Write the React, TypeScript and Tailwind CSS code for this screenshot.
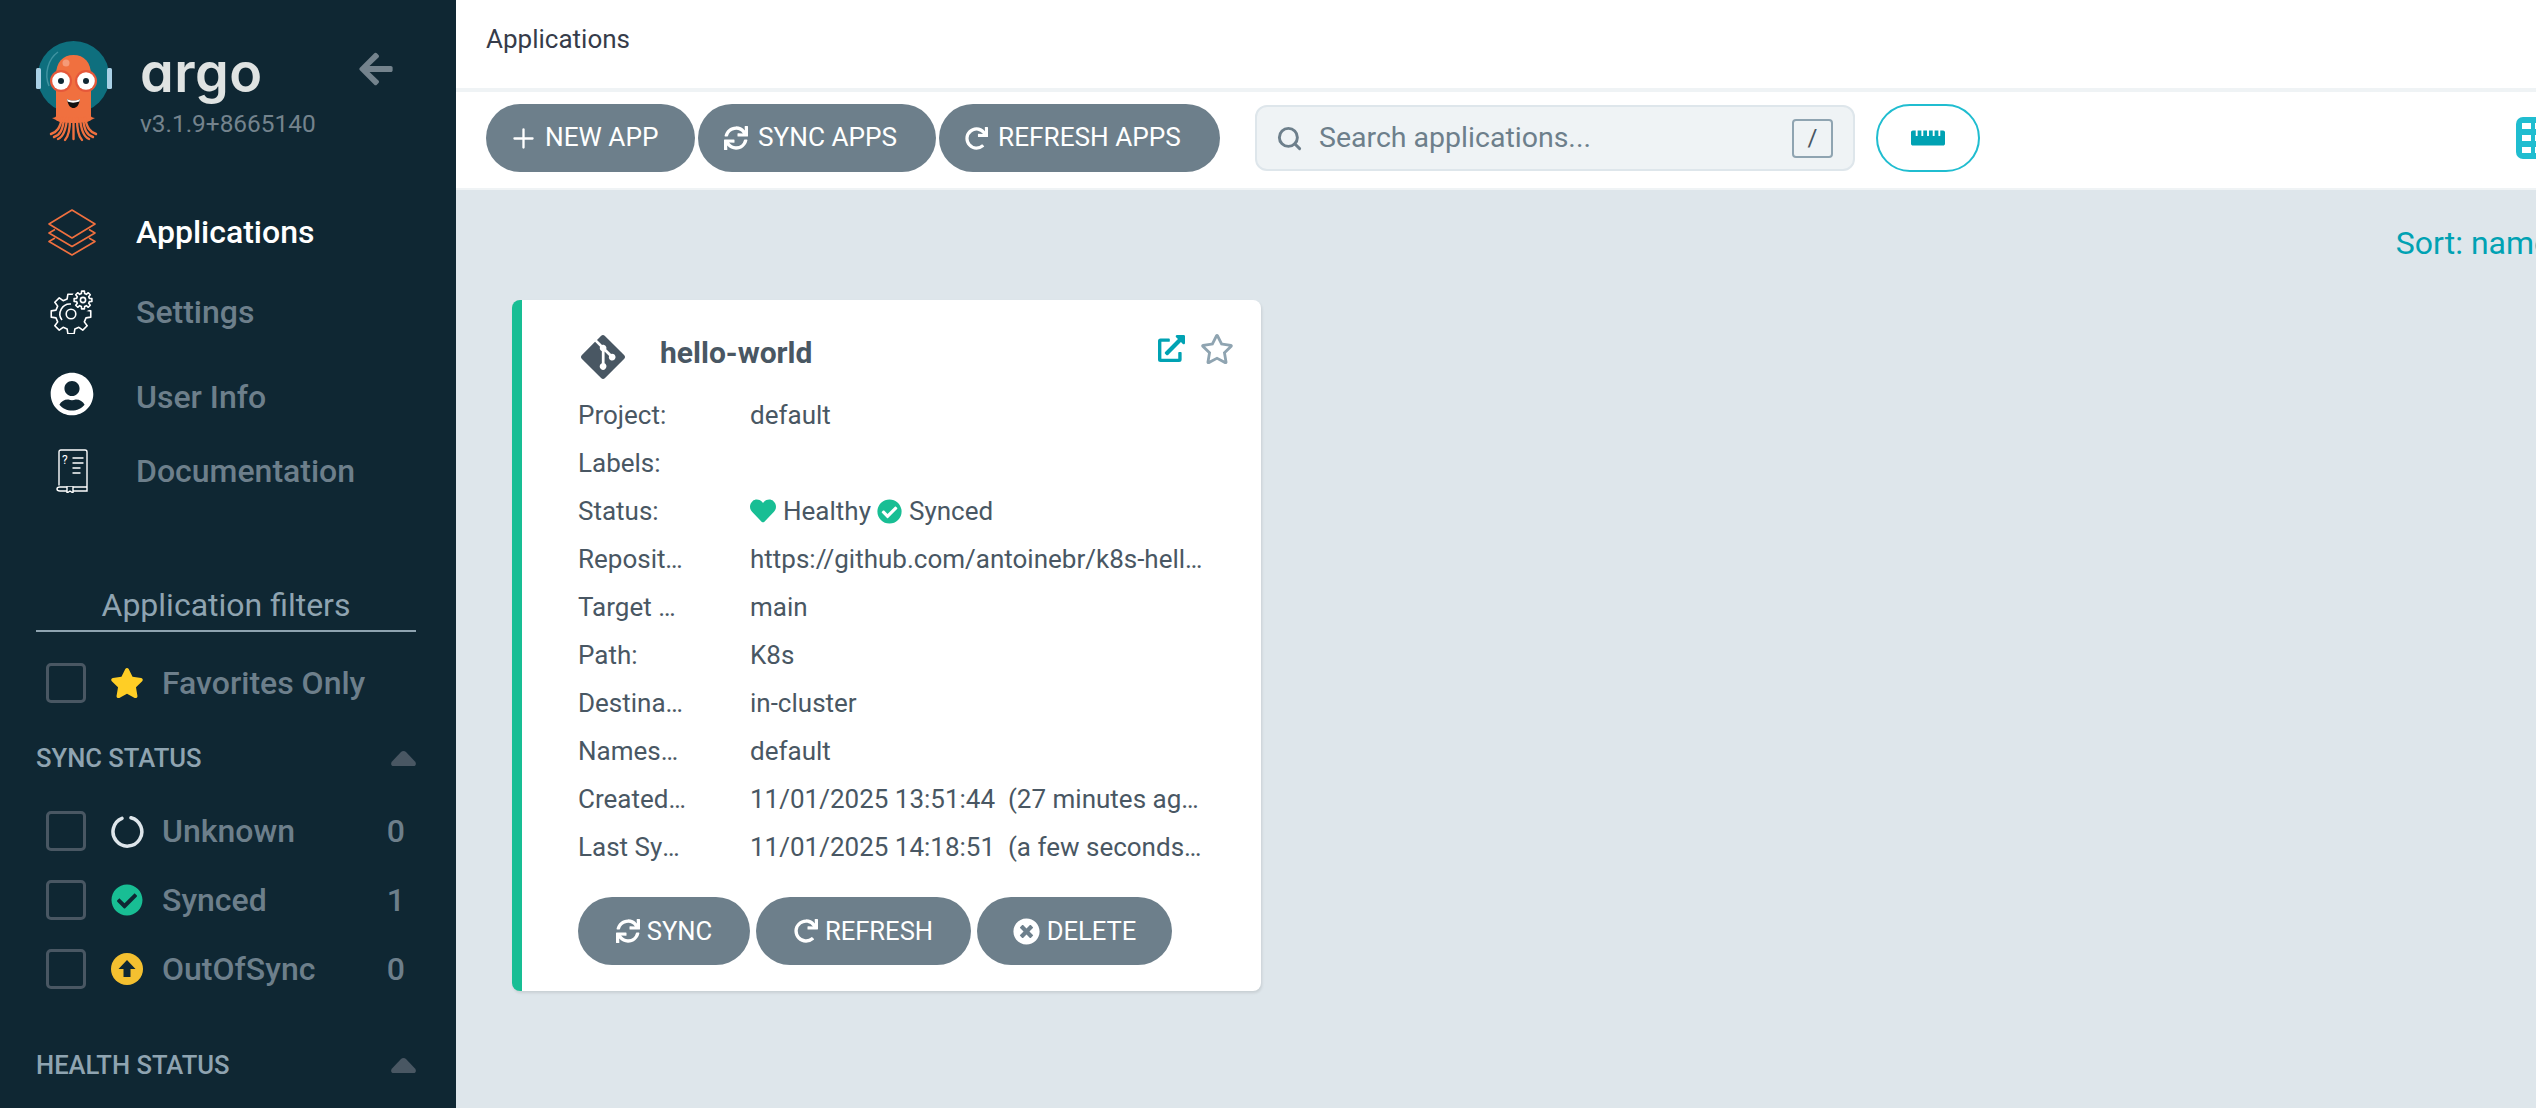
import { FaArrowLeft, FaCheckCircle, FaExternalLinkAlt, FaGitAlt, FaHeart, FaRedo, FaRegStar, FaRulerHorizontal, FaStar, FaSync, FaTimesCircle, FaUserCircle } from "react-icons/fa";
import { Plus, Search } from "lucide-react";
import type { ReactNode } from "react";

const facts: [string, ReactNode][] = [
  ["Project:", "default"],
  ["Labels:", ""],
  ["Status:", <StatusValue key="status" />],
  ["Repository:", "https://github.com/antoinebr/k8s-hello-world"],
  ["Target Revision:", "main"],
  ["Path:", "K8s"],
  ["Destination:", "in-cluster"],
  ["Namespace:", "default"],
  ["Created At:", "11/01/2025 13:51:44\u00a0\u00a0(27 minutes ago)"],
  ["Last Sync:", "11/01/2025 14:18:51\u00a0\u00a0(a few seconds ago)"],
];

export default function App() {
  return (
    <div className="flex h-screen w-full overflow-hidden bg-[#dee6eb] font-[Roboto,sans-serif]">
      <Sidebar />
      <main className="min-w-0 flex-1 overflow-hidden">
        <div className="w-[2120px]">
          <header className="flex h-[92px] items-center border-b-4 border-[#eff3f5] bg-white pl-[30px] pb-[10px] text-[26px] text-[#363c4a]">
            Applications
          </header>
          <div className="flex h-[98px] items-center justify-between border-b-2 border-[#eff3f5] bg-white pb-[4px] pl-[30px] pr-[18px]">
            <div className="flex items-center">
              <div className="flex gap-[3px]">
                <ToolButton icon={<Plus size={31} strokeWidth={1.8} className="-mx-[4px]" />} label="NEW APP" width="w-[209px]" />
                <ToolButton icon={<FaSync className="text-[24px]" />} label="SYNC APPS" width="w-[238px]" />
                <ToolButton icon={<FaRedo className="text-[23px]" />} label="REFRESH APPS" width="w-[281px]" />
              </div>
              <SearchBox />
              <button className="ml-[21px] flex h-[68px] w-[104px] items-center justify-center rounded-full border-2 border-[#20bdd0] text-[34px] text-[#00a2b3]">
                <FaRulerHorizontal />
              </button>
            </div>
            <GridIcon />
          </div>
          <div className="flex h-[110px] items-center justify-end pb-[4px] pr-[25px] text-[32px] text-[#00a2b3]">Sort: name</div>
          <div className="ml-[56px]">
            <AppCard />
          </div>
        </div>
      </main>
    </div>
  );
}

function Sidebar() {
  return (
    <aside className="h-full w-[456px] shrink-0 overflow-hidden bg-[#0f2733]">
      <div className="flex h-[192px] pl-[34px] pt-[38px]">
        <ArgoLogo />
        <div className="ml-[26px] w-[217px]">
          <div className="h-[60px] pt-[5px] text-[54px] leading-[60px] font-semibold tracking-[0.5px] text-[#dfe3e2] font-[Inter,sans-serif] [font-feature-settings:'cv11']">argo</div>
          <div className="mt-[14px] text-[24.4px] leading-[24px] text-[#74838d]">v3.1.9+8665140</div>
        </div>
        <FaArrowLeft className="mt-[12px] text-[38px] text-[#74838d]" />
      </div>
      <nav>
        <NavItem height="h-[80px]" active label="Applications" icon={<StackIcon />} />
        <NavItem height="h-[80px]" label="Settings" icon={<GearIcon />} />
        <NavItem height="h-[90px]" label="User Info" icon={<FaUserCircle className="-mt-[6px] text-[44px] text-white" />} />
        <NavItem height="h-[58px]" label="Documentation" icon={<BookIcon />} />
      </nav>
      <section className="ml-[36px] mr-[40px] mt-[86px]">
        <div className="border-b-2 border-[#8fa4b1] pb-[6px] text-center text-[32px] leading-[38px] text-[#8fa4b1]">Application filters</div>
        <div className="mt-[31px]">
          <FilterRow label="Favorites Only" icon={<FaStar className="text-[34px] text-[#ffce25]" />} />
        </div>
        <FilterHeading label="SYNC STATUS" />
        <div className="mt-[38px] flex flex-col gap-[29px]">
          <FilterRow label="Unknown" count={0} icon={<UnknownIcon />} />
          <FilterRow label="Synced" count={1} icon={<FaCheckCircle className="text-[32px] text-[#18be94]" />} />
          <FilterRow label="OutOfSync" count={0} icon={<OutOfSyncIcon />} />
        </div>
        <div className="pt-[21px]">
          <FilterHeading label="HEALTH STATUS" />
        </div>
      </section>
    </aside>
  );
}

function NavItem({ height, label, icon, active }: { height: string; label: string; icon: ReactNode; active?: boolean }) {
  return (
    <div className={`flex items-center pl-[44px] ${height}`}>
      <div className="flex w-[56px] justify-center">{icon}</div>
      <span className={`ml-[36px] text-[32px] font-medium ${active ? "text-white" : "text-[#6d7f8b]"}`}>{label}</span>
    </div>
  );
}

function FilterHeading({ label }: { label: string }) {
  return (
    <div className="mt-[40px] flex h-[30px] items-center justify-between text-[25.6px] font-medium text-[#8fa4b1]">
      {label}
      <svg width="25" height="15" viewBox="0 0 25 15" fill="#495763">
        <path d="M12.5 0 C13.5 0 14.2 .4 15 1.1 L24 10.5 C25.6 12.3 24.9 15 22.5 15 L2.5 15 C.1 15 -.6 12.3 1 10.5 L10 1.1 C10.8 .4 11.5 0 12.5 0Z" />
      </svg>
    </div>
  );
}

function FilterRow({ label, icon, count }: { label: string; icon: ReactNode; count?: number }) {
  return (
    <div className="flex h-[40px] items-center pl-[10px] pr-[11px] text-[32px] font-medium text-[#6d7f8b]">
      <span className="h-[40px] w-[40px] shrink-0 rounded-[5px] border-[3px] border-[#495763]" />
      <span className="ml-[24px] flex w-[34px] shrink-0 justify-center">{icon}</span>
      <span className="ml-[18px] flex-1">{label}</span>
      {count !== undefined && <span>{count}</span>}
    </div>
  );
}

function SearchBox() {
  return (
    <div className="ml-[35px] flex h-[66px] w-[600px] items-center rounded-[12px] border-2 border-[#dee6eb] bg-[#eff3f5] pl-[19px] pr-[20px]">
      <Search size={27} strokeWidth={2.6} className="text-[#6d7f8b]" />
      <span className="ml-[16px] flex-1 text-[28.5px] text-[#6d7f8b]">Search applications...</span>
      <span className="flex h-[39px] w-[41px] items-center justify-center rounded-[4px] border-2 border-[#8fa4b1] text-[24px] text-[#495763]">/</span>
    </div>
  );
}

function ToolButton({ icon, label, width }: { icon: ReactNode; label: string; width: string }) {
  return (
    <button className={`flex h-[68px] items-center gap-[10px] rounded-full bg-[#6d7f8b] pl-[26px] text-[26.2px] text-white ${width}`}>
      {icon}
      {label}
    </button>
  );
}

function AppCard() {
  return (
    <article className="h-[691px] w-[749px] rounded-[8px] border-l-[10px] border-[#18be94] bg-white pl-[56px] pr-[27px] pt-[32px] shadow-[1px_2px_3px_rgba(0,0,0,0.1)]">
      <div className="flex h-[59px] items-start">
        <FaGitAlt className="text-[50px] text-[#495763]" />
        <h2 className="ml-[32px] mt-[2px] flex-1 text-[30px] leading-[38px] font-bold text-[#495763]">hello-world</h2>
        <FaExternalLinkAlt className="mt-[3px] text-[27px] text-[#00a2b3]" />
        <FaRegStar className="ml-[15px] text-[34px] text-[#8fa4b1]" />
      </div>
      {facts.map(([label, value]) => (
        <div key={label} className="flex h-[48px] items-center text-[26px] text-[#495763]">
          <div className="mr-[64px] w-[108px] shrink-0 truncate">{label}</div>
          <div className="w-[454px] truncate">{value}</div>
        </div>
      ))}
      <div className="mt-[26px] flex gap-[6px]">
        <CardButton icon={<FaSync className="text-[24px]" />} label="SYNC" width="w-[172px]" />
        <CardButton icon={<FaRedo className="text-[24px]" />} label="REFRESH" width="w-[215px]" />
        <CardButton icon={<FaTimesCircle className="text-[27px]" />} label="DELETE" width="w-[195px]" />
      </div>
    </article>
  );
}

function CardButton({ icon, label, width }: { icon: ReactNode; label: string; width: string }) {
  return (
    <button className={`flex h-[68px] items-center justify-center gap-[7px] rounded-full bg-[#6d7f8b] text-[25.6px] text-white ${width}`}>
      {icon}
      {label}
    </button>
  );
}

function StatusValue() {
  return (
    <span className="flex items-center">
      <FaHeart className="text-[26px] text-[#18be94]" />
      <span className="ml-[7px]">Healthy</span>
      <FaCheckCircle className="ml-[6px] text-[25px] text-[#18be94]" />
      <span className="ml-[7px]">Synced</span>
    </span>
  );
}

function GridIcon() {
  return (
    <svg width="42" height="42" viewBox="0 0 42 42" className="shrink-0">
      <rect width="42" height="42" rx="7" fill="#20bdd0" />
      {[6, 18, 30].map((y) => (
        <g key={y} fill="#fff">
          <rect x="6" y={y} width="9" height="6" />
          <rect x="19" y={y} width="17" height="6" />
        </g>
      ))}
    </svg>
  );
}

function UnknownIcon() {
  return (
    <svg width="33" height="33" viewBox="0 0 33 33" fill="none" stroke="#dee6eb" strokeWidth="3.5" strokeLinecap="round">
      <path d="M20 2.8 A14.4 14.4 0 1 1 11 3.4" />
    </svg>
  );
}

function OutOfSyncIcon() {
  return (
    <svg width="32" height="32" viewBox="0 0 32 32">
      <circle cx="16" cy="16" r="16" fill="#f4c030" />
      <path d="M16 7 L24.5 16 H19.5 V24 H12.5 V16 H7.5Z" fill="#0f2733" />
    </svg>
  );
}

function StackIcon() {
  return (
    <svg width="48" height="47" viewBox="0 0 48 47" fill="none" stroke="#f0703f" strokeWidth="1.6" strokeLinejoin="round">
      <path d="M24 1 L47 15 L24 29 L1 15Z" />
      <path d="M7 20.5 L1 24 L24 37.5 L47 24 L41 20.5" />
      <path d="M7 29 L1 32.5 L24 46 L47 32.5 L41 29" />
    </svg>
  );
}

function gearPath(cx: number, cy: number, outer: number, inner: number, teeth: number) {
  const step = (Math.PI * 2) / teeth;
  const points: string[] = [];
  for (let i = 0; i < teeth; i++) {
    const a = i * step;
    const at = (r: number, t: number) => `${(cx + r * Math.cos(a + t * step)).toFixed(2)} ${(cy + r * Math.sin(a + t * step)).toFixed(2)}`;
    points.push(at(inner, -0.32), at(outer, -0.2), at(outer, 0.2), at(inner, 0.32));
  }
  return `M${points.join(" L")}Z`;
}

function GearIcon() {
  return (
    <svg width="44" height="44" viewBox="0 0 44 44" fill="none" stroke="#fff" strokeWidth="1.6" strokeLinejoin="round">
      <path d={gearPath(21, 24, 20, 15.5, 8)} />
      <circle cx="21" cy="24" r="4.8" />
      <path d="M21 14 A10 10 0 0 0 12 30" />
      <circle cx="33" cy="10" r="11.5" fill="#0f2733" stroke="none" />
      <path d={gearPath(33, 10, 9, 6.6, 8)} fill="#0f2733" />
      <circle cx="33" cy="10" r="2.6" />
    </svg>
  );
}

function BookIcon() {
  return (
    <svg width="32" height="44" viewBox="0 0 32 44" fill="none" stroke="#fff" strokeWidth="1.4" strokeLinecap="round">
      <path d="M3 36 V3 Q3 1 5 1 H29 Q31 1 31 3 V38 H4 Q1 38 1 40 T4 42 H31 V38" />
      <path d="M17 9 H27 M17 14 H27 M17 19 H24 M17 24 H24" />
      <path d="M11 38 V44 L14 42 L17 44 V38" fill="#0f2733" />
      <text x="6" y="15" fontSize="12" fill="#fff" stroke="none">?</text>
    </svg>
  );
}

function ArgoLogo() {
  const tentacles = [
    "M62 118 C60 128 57 132 51 134",
    "M64 118 C63 130 60 135 54 137",
    "M67 118 C66 130 63 137 58 139",
    "M70 118 C70 130 68 137 65 140",
    "M73.5 118 L73.5 139",
    "M77 118 C77 130 79 137 82 140",
    "M80 118 C81 130 84 137 89 139",
    "M83 118 C84 130 87 135 93 137",
    "M85 118 C87 128 90 132 96 134",
  ];
  return (
    <svg width="80" height="104" viewBox="34 38 80 104" className="shrink-0">
      <circle cx="73.5" cy="77" r="36" fill="#0e6f7e" />
      <rect x="36" y="68" width="5" height="21" rx="1.5" fill="#a9d0e6" />
      <rect x="107" y="68" width="5" height="21" rx="1.5" fill="#a9d0e6" />
      <path d="M49 86 C44 74 48 59 58 52" fill="none" stroke="#3f93a1" strokeWidth="1.5" />
      <path d="M56 120 L56 75 C56 62 63 55 73.5 55 C84 55 91 62 91 75 L91 120 C86 124 61 124 56 120Z" fill="#f0703f" />
      <path d="M58 114 C56 117 54 118 52 118 L60 122 H87 L95 118 C93 118 91 117 89 114Z" fill="#f0703f" />
      <circle cx="66" cy="63" r="3.5" fill="#f59a77" />
      {tentacles.map((d) => (
        <path key={d} d={d} fill="none" stroke="#f0703f" strokeWidth="2.4" strokeLinecap="round" />
      ))}
      <circle cx="61" cy="81" r="11" fill="#e5583a" />
      <circle cx="86" cy="81" r="11" fill="#e5583a" />
      <circle cx="61" cy="81" r="8.8" fill="#fff" />
      <circle cx="86" cy="81" r="8.8" fill="#fff" />
      <circle cx="61" cy="81" r="3" fill="#0f2733" />
      <circle cx="86" cy="81" r="3" fill="#0f2733" />
      <path d="M67 99 C71 101 76 101 80 99 C79 106 76 108 73.5 108 C71 108 68 106 67 99Z" fill="#111" />
      <path d="M67 99 C71 101 76 101 80 99 L79.4 101.5 C75 103 71 103 67.6 101.5Z" fill="#fff" />
    </svg>
  );
}
